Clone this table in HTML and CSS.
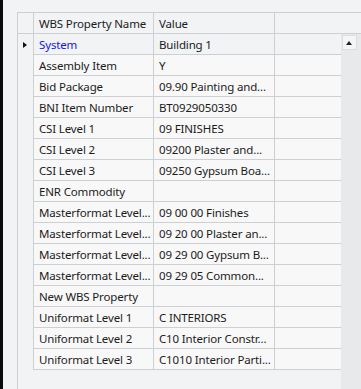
FILE: index.html
```html
<!DOCTYPE html>
<html lang="en">
<head>
  <meta charset="UTF-8">
  <meta name="viewport" content="width=device-width, initial-scale=1.0">
  <title>WBS Properties</title>
  <link rel="stylesheet" href="styles.css">
</head>
<body>
  <div class="window">
    <div class="edge"></div>

    <div class="pane">
      <div class="grid">
        <div class="grid-head">
          <div class="cell rh"></div>
          <div class="cell name">WBS Property Name</div>
          <div class="cell value">Value</div>
          <div class="cell fill"></div>
        </div>

        <div class="grid-body">
          <div class="rows">
            <div class="row current">
              <div class="cell rh"><span class="caret"></span></div>
              <div class="cell name link">System</div>
              <div class="cell value">Building 1</div>
              <div class="cell fill"></div>
            </div>
            <div class="row">
              <div class="cell rh"></div>
              <div class="cell name">Assembly Item</div>
              <div class="cell value">Y</div>
              <div class="cell fill"></div>
            </div>
            <div class="row">
              <div class="cell rh"></div>
              <div class="cell name">Bid Package</div>
              <div class="cell value">09.90 Painting and...</div>
              <div class="cell fill"></div>
            </div>
            <div class="row">
              <div class="cell rh"></div>
              <div class="cell name">BNI Item Number</div>
              <div class="cell value">BT0929050330</div>
              <div class="cell fill"></div>
            </div>
            <div class="row">
              <div class="cell rh"></div>
              <div class="cell name">CSI Level 1</div>
              <div class="cell value">09 FINISHES</div>
              <div class="cell fill"></div>
            </div>
            <div class="row">
              <div class="cell rh"></div>
              <div class="cell name">CSI Level 2</div>
              <div class="cell value">09200 Plaster and...</div>
              <div class="cell fill"></div>
            </div>
            <div class="row">
              <div class="cell rh"></div>
              <div class="cell name">CSI Level 3</div>
              <div class="cell value">09250 Gypsum Boa...</div>
              <div class="cell fill"></div>
            </div>
            <div class="row">
              <div class="cell rh"></div>
              <div class="cell name">ENR Commodity</div>
              <div class="cell value"></div>
              <div class="cell fill"></div>
            </div>
            <div class="row">
              <div class="cell rh"></div>
              <div class="cell name">Masterformat Level...</div>
              <div class="cell value">09 00 00 Finishes</div>
              <div class="cell fill"></div>
            </div>
            <div class="row">
              <div class="cell rh"></div>
              <div class="cell name">Masterformat Level...</div>
              <div class="cell value">09 20 00 Plaster an...</div>
              <div class="cell fill"></div>
            </div>
            <div class="row">
              <div class="cell rh"></div>
              <div class="cell name">Masterformat Level...</div>
              <div class="cell value">09 29 00 Gypsum B...</div>
              <div class="cell fill"></div>
            </div>
            <div class="row">
              <div class="cell rh"></div>
              <div class="cell name">Masterformat Level...</div>
              <div class="cell value">09 29 05 Common...</div>
              <div class="cell fill"></div>
            </div>
            <div class="row">
              <div class="cell rh"></div>
              <div class="cell name">New WBS Property</div>
              <div class="cell value"></div>
              <div class="cell fill"></div>
            </div>
            <div class="row">
              <div class="cell rh"></div>
              <div class="cell name">Uniformat Level 1</div>
              <div class="cell value">C INTERIORS</div>
              <div class="cell fill"></div>
            </div>
            <div class="row">
              <div class="cell rh"></div>
              <div class="cell name">Uniformat Level 2</div>
              <div class="cell value">C10 Interior Constr...</div>
              <div class="cell fill"></div>
            </div>
            <div class="row">
              <div class="cell rh"></div>
              <div class="cell name">Uniformat Level 3</div>
              <div class="cell value">C1010 Interior Parti...</div>
              <div class="cell fill"></div>
            </div>
          </div>

          <div class="vscroll">
            <button class="vscroll-up" type="button"></button>
          </div>
        </div>
      </div>
    </div>
  </div>
</body>
</html>
```

FILE: styles.css
```css
html, body {
  height: 100%;
}
body {
  margin: 0;
  font-family: "Segoe UI", "Noto Sans", sans-serif;
  font-size: 11.5px;
  letter-spacing: -0.15px;
  color: #1b1b1b;
  background-color: #f2f3f5;
  overflow: hidden;
}
.window {
  display: flex;
  height: 100%;
}
.edge {
  width: 3px;
  background-color: #0a0a0a;
}
.pane {
  flex: 1;
  padding: 12px 0 0 14px;
  display: flex;
}
.grid {
  flex: 1;
  display: flex;
  flex-direction: column;
  border-left: 1px solid #cdd0d3;
}
.grid-head {
  display: flex;
  border-top: 1px solid #cdd0d3;
}
.grid-body {
  flex: 1;
  display: flex;
}
.rows {
  flex: 1;
}
.row {
  display: flex;
  background-color: #f8f8f8;
}
.row.current {
  background-color: #f1f3f5;
}
.cell {
  box-sizing: border-box;
  height: 21px;
  line-height: 21px;
  padding: 0 4px 0 5px;
  white-space: nowrap;
  overflow: hidden;
  border-right: 1px solid #cdd0d3;
  border-bottom: 1px solid #cdd0d3;
}
.cell.rh {
  width: 16px;
  padding: 0;
  display: flex;
  align-items: center;
  justify-content: center;
}
.row .cell.rh {
  border-bottom: none;
  background-color: #f2f3f5;
}
.cell.name {
  width: 120px;
}
.cell.value {
  width: 121px;
}
.cell.fill {
  flex: 1;
  border-right: none;
}
.link {
  color: #1515e6;
}
.caret {
  width: 0;
  height: 0;
  border-top: 3.5px solid transparent;
  border-bottom: 3.5px solid transparent;
  border-left: 4px solid #111;
  margin-left: -1px;
}
.vscroll {
  width: 19px;
  background-color: #e8e9eb;
  padding: 1px 0 0 1px;
}
.vscroll-up {
  display: block;
  width: 15px;
  height: 15px;
  padding: 0;
  border: 1px solid #dcdde0;
  background-color: #f5f5f6;
  position: relative;
}
/* small up arrow glyph on the scroll button */
.vscroll-up::after {
  content: "";
  position: absolute;
  left: 3px;
  top: 5px;
  border-left: 3.5px solid transparent;
  border-right: 3.5px solid transparent;
  border-bottom: 4px solid #222;
}
```
